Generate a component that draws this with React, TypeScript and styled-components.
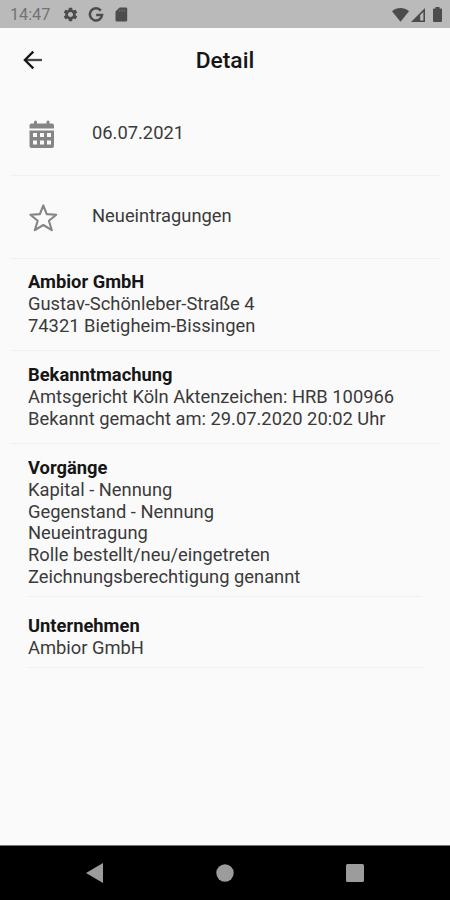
import React from "react";
import styled, { createGlobalStyle } from "styled-components";
import { MdSettings } from "react-icons/md";

const GlobalStyle = createGlobalStyle`
  * { box-sizing: border-box; }
  body { margin: 0; background: #fafafa; font-family: Roboto, sans-serif; }
`;

const Screen = styled.div`
  display: flex;
  flex-direction: column;
  width: 450px;
  height: 900px;
  overflow: hidden;
  background: #fafafa;
  color: #3a3a3a;
`;

const StatusBar = styled.header`
  display: flex;
  align-items: center;
  justify-content: space-between;
  height: 28px;
  padding: 1px 8px 0 10px;
  background: #bababa;
  color: #4c4c4c;
`;

const Clock = styled.span`
  width: 43px;
  font-size: 16.2px;
  line-height: 20px;
  color: #737373;
`;

const StatusGroup = styled.div<{ $gap: number }>`
  display: flex;
  align-items: center;
  gap: ${(p) => p.$gap}px;
  svg { display: block; }
`;

const TitleBar = styled.div`
  display: grid;
  grid-template-columns: 60px 1fr 60px;
  align-items: center;
  height: 64px;
  padding-top: 1px;
  color: #161616;
`;

const BackButton = styled.button`
  display: flex;
  padding: 0 0 1px 23px;
  border: 0;
  background: none;
  color: #161616;
`;

const Title = styled.h1`
  margin: 0;
  text-align: center;
  font-size: 22.8px;
  font-weight: 500;
  line-height: 26px;
`;

const Content = styled.main`
  flex: 1;
  display: flex;
  flex-direction: column;
  font-size: 18.33px;
  line-height: 21.8px;
`;

const InfoRow = styled.div<{ $height: number }>`
  display: flex;
  align-items: center;
  height: ${(p) => p.$height}px;
  margin: 0 10px;
  padding: 0 0 2px 18px;
  border-bottom: 1px solid #f1f1f1;
`;

const RowIcon = styled.span`
  display: flex;
  align-items: center;
  width: 64px;
  color: #858585;
  svg { display: block; flex: none; margin-top: 3px; }
`;

const Section = styled.section<{
  $height: number;
  $top: number;
  $edges: [number, number];
}>`
  height: ${(p) => p.$height}px;
  margin: 0 ${(p) => p.$edges[1]}px 0 ${(p) => p.$edges[0]}px;
  padding: ${(p) => p.$top}px 0 0 ${(p) => 28 - p.$edges[0]}px;
  border-bottom: 1px solid #f0f0f0;
  white-space: nowrap;
`;

const Heading = styled.h2`
  margin: 0;
  font-size: inherit;
  font-weight: 700;
  line-height: inherit;
  color: #161616;
`;

const Line = styled.p`
  margin: 0;
`;

const NavBar = styled.nav`
  display: grid;
  grid-template-columns: 160px 130px 130px;
  height: 55px;
  border-top: 1px solid #777;
  background: #000;
  align-items: center;
`;

const NavButton = styled.button<{ $indent?: number }>`
  display: flex;
  justify-content: center;
  padding: 0 0 0 ${(p) => p.$indent ?? 0}px;
  border: 0;
  background: none;
  svg { display: block; fill: #9c9c9c; }
`;

const GoogleGlyph = () => (
  <svg width="16" height="16" viewBox="0 0 16 16" fill="none" stroke="currentColor" strokeWidth="2.5">
    <path d="M12.8 3.6A6.1 6.1 0 1 0 14.1 8H8.2" />
  </svg>
);

const CardGlyph = () => (
  <svg width="15" height="15" viewBox="-2 0 15 15">
    <path d="M4.6.5H11a1.2 1.2 0 0 1 1.2 1.2v11.6a1.2 1.2 0 0 1-1.2 1.2H1.7a1.2 1.2 0 0 1-1.2-1.2V4.6Z" fill="currentColor" />
    <path d="M4.7 2.5v2.3M7 2.5v2.3M9.3 2.5v2.3" stroke="#707070" />
  </svg>
);

const WifiGlyph = () => (
  <svg width="17" height="14" viewBox="0 0 17 14">
    <path d="M0 3.3C5-1 12-1 17 3.3L8.5 13.8Z" fill="currentColor" />
  </svg>
);

const SignalGlyph = () => (
  <svg width="14" height="14" viewBox="0 0 14 14">
    <path d="M0 14 14 0V14Z" fill="currentColor" />
    <path d="M9.2 7.1 12.4 3.9V12.4H9.2Z" fill="#bababa" />
  </svg>
);

const BatteryGlyph = () => (
  <svg width="9" height="15" viewBox="0 0 9 15">
    <path d="M2.5 0h4v1.6H8a1 1 0 0 1 1 1V14a1 1 0 0 1-1 1H1a1 1 0 0 1-1-1V2.6a1 1 0 0 1 1-1h1.5Z" fill="currentColor" />
  </svg>
);

const ArrowGlyph = () => (
  <svg width="20" height="20" viewBox="0 0 20 20" fill="none" stroke="currentColor" strokeWidth="2.3">
    <path d="M2.5 10H19" stroke="#484848" />
    <path d="M10.3 1.6 1.9 10l8.4 8.4" />
  </svg>
);

const CalendarGlyph = () => (
  <svg width="28" height="28" viewBox="0 0 28 28" fill="currentColor">
    <path d="M6 3.5V2a1.5 1.5 0 0 1 3 0v1.5h9.5V2a1.5 1.5 0 0 1 3 0v1.5H24a2 2 0 0 1 2 2v3H1.5v-3a2 2 0 0 1 2-2Z" />
    <path
      fillRule="evenodd"
      d="M1.5 10.5H26V26a2 2 0 0 1-2 2H3.5a2 2 0 0 1-2-2ZM5 13v4h4v-4Zm7 0v4h4v-4Zm7 0v4h4v-4ZM5 20.5v4h4v-4Zm7 0v4h4v-4Zm7 0v4h4v-4Z"
    />
  </svg>
);

const StarGlyph = () => (
  <svg width="30" height="30" viewBox="0 0 30 30" fill="none" stroke="currentColor" strokeWidth="2.1" strokeLinejoin="round">
    <path d="M15.3 2.4 18.7 11.1 28.2 11.7 20.9 17.7 23.8 27.2 15.3 22 6.8 27.2 9.7 17.7 2.4 11.7 11.9 11.1Z" />
  </svg>
);

type SectionData = {
  heading: string;
  lines: string[];
  height: number;
  top: number;
  edges: [number, number];
};

const sections: SectionData[] = [
  {
    heading: "Ambior GmbH",
    lines: ["Gustav-Schönleber-Straße 4", "74321 Bietigheim-Bissingen"],
    height: 92,
    top: 12,
    edges: [10, 10],
  },
  {
    heading: "Bekanntmachung",
    lines: [
      "Amtsgericht Köln Aktenzeichen: HRB 100966",
      "Bekannt gemacht am: 29.07.2020 20:02 Uhr",
    ],
    height: 93,
    top: 13,
    edges: [10, 10],
  },
  {
    heading: "Vorgänge",
    lines: [
      "Kapital - Nennung",
      "Gegenstand - Nennung",
      "Neueintragung",
      "Rolle bestellt/neu/eingetreten",
      "Zeichnungsberechtigung genannt",
    ],
    height: 153,
    top: 13,
    edges: [28, 28],
  },
  {
    heading: "Unternehmen",
    lines: ["Ambior GmbH"],
    height: 71,
    top: 18,
    edges: [28, 26],
  },
];

export default function App() {
  return (
    <Screen>
      <GlobalStyle />
      <StatusBar>
        <StatusGroup $gap={9}>
          <Clock>14:47</Clock>
          <MdSettings size={17} />
          <GoogleGlyph />
          <CardGlyph />
        </StatusGroup>
        <StatusGroup $gap={8}>
          <StatusGroup $gap={2}>
            <WifiGlyph />
            <SignalGlyph />
          </StatusGroup>
          <BatteryGlyph />
        </StatusGroup>
      </StatusBar>
      <TitleBar>
        <BackButton aria-label="Zurück">
          <ArrowGlyph />
        </BackButton>
        <Title>Detail</Title>
      </TitleBar>
      <Content>
        <InfoRow $height={84}>
          <RowIcon><CalendarGlyph /></RowIcon>
          06.07.2021
        </InfoRow>
        <InfoRow $height={83}>
          <RowIcon><StarGlyph /></RowIcon>
          Neueintragungen
        </InfoRow>
        {sections.map(({ heading, lines, height, top, edges }) => (
          <Section key={heading} $height={height} $top={top} $edges={edges}>
            <Heading>{heading}</Heading>
            {lines.map((line) => (
              <Line key={line}>{line}</Line>
            ))}
          </Section>
        ))}
      </Content>
      <NavBar>
        <NavButton $indent={28} aria-label="Zurück">
          <svg width="17" height="20" viewBox="0 0 17 20"><path d="M0 10 17 0V20Z" /></svg>
        </NavButton>
        <NavButton aria-label="Startseite">
          <svg width="18" height="18" viewBox="0 0 18 18"><circle cx="9" cy="9" r="8.7" /></svg>
        </NavButton>
        <NavButton aria-label="Übersicht">
          <svg width="18" height="18" viewBox="0 0 18 18"><rect width="18" height="18" rx="1.5" /></svg>
        </NavButton>
      </NavBar>
    </Screen>
  );
}
